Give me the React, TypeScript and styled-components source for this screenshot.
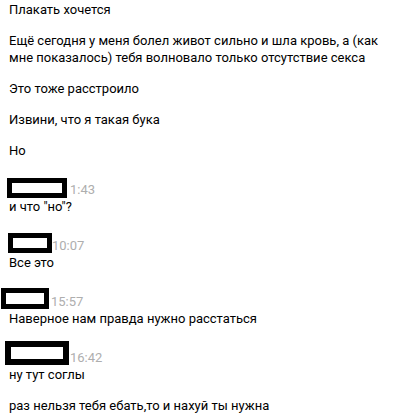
import React from "react";
import styled, { createGlobalStyle } from "styled-components";

const Global = createGlobalStyle`
  html, body { margin: 0; padding: 0; background: #ffffff; }
  body { font-family: Roboto, "Noto Sans", Arial, sans-serif; }
`;

const Page = styled.div`
  width: 410px;
  height: 414px;
  overflow: hidden;
  box-sizing: border-box;
  padding: 1px 0 0 9px;
  display: flex;
  flex-direction: column;
`;

const Group = styled.section<{ $first?: boolean }>`
  display: flex;
  flex-direction: column;
  gap: 14px;
  margin-top: ${(p) => (p.$first ? 0 : 22)}px;
`;

const Body = styled.div`
  display: flex;
  flex-direction: column;
  gap: 14px;
`;

const Stack = styled.div`
  display: flex;
  flex-direction: column;
`;

const Header = styled.div`
  display: flex;
  align-items: flex-start;
  height: 17px;
`;

const Redact = styled.div<{ $x: number; $y: number; $w: number; $h: number; $b: number }>`
  box-sizing: border-box;
  flex: none;
  margin-left: ${(p) => p.$x}px;
  margin-top: ${(p) => p.$y}px;
  width: ${(p) => p.$w}px;
  height: ${(p) => p.$h}px;
  border: ${(p) => p.$b}px solid #000;
  background: #fff;
`;

const Time = styled.span<{ $gap: number }>`
  margin-left: ${(p) => p.$gap}px;
  font-size: 13px;
  line-height: 17px;
  color: #aeaeae;
`;

const Text = styled.p`
  margin: 0;
  width: 385px;
  font-size: 13px;
  line-height: 17px;
  color: #000;
`;

type Msg = {
  box?: { x: number; y: number; w: number; h: number; b: number; gap: number; time: string };
  lines: string[];
};

const data: Msg[] = [
  {
    lines: [
      "Плакать хочется",
      "Ещё сегодня у меня болел живот сильно и шла кровь, а (как мне показалось) тебя волновало только отсутствие секса",
      "Это тоже расстроило",
      "Извини, что я такая бука",
      "Но",
    ],
  },
  { box: { x: -2, y: -3, w: 60, h: 20, b: 5, gap: 3, time: "1:43" }, lines: ["и что \"но\"?"] },
  { box: { x: -1, y: -4, w: 44, h: 20, b: 5, gap: 0, time: "10:07" }, lines: ["Все это"] },
  { box: { x: -8, y: -5, w: 48, h: 21, b: 5, gap: 2, time: "15:57" }, lines: ["Наверное нам правда нужно расстаться"] },
  {
    box: { x: -4, y: -8, w: 64, h: 24, b: 6, gap: 1, time: "16:42" },
    lines: ["ну тут соглы", "раз нельзя тебя ебать,то и нахуй ты нужна"],
  },
];

export default function App() {
  return (
    <>
      <Global />
      <Page>
        {data.map((g, i) =>
          g.box ? (
            <Group key={i}>
              <Stack>
                <Header>
                  <Redact $x={g.box.x} $y={g.box.y} $w={g.box.w} $h={g.box.h} $b={g.box.b} />
                  <Time $gap={g.box.gap}>{g.box.time}</Time>
                </Header>
                <Text>{g.lines[0]}</Text>
              </Stack>
              {g.lines.slice(1).map((l, j) => (
                <Text key={j}>{l}</Text>
              ))}
            </Group>
          ) : (
            <Group key={i} $first>
              <Body>
                {g.lines.map((l, j) => (
                  <Text key={j}>{l}</Text>
                ))}
              </Body>
            </Group>
          )
        )}
      </Page>
    </>
  );
}
